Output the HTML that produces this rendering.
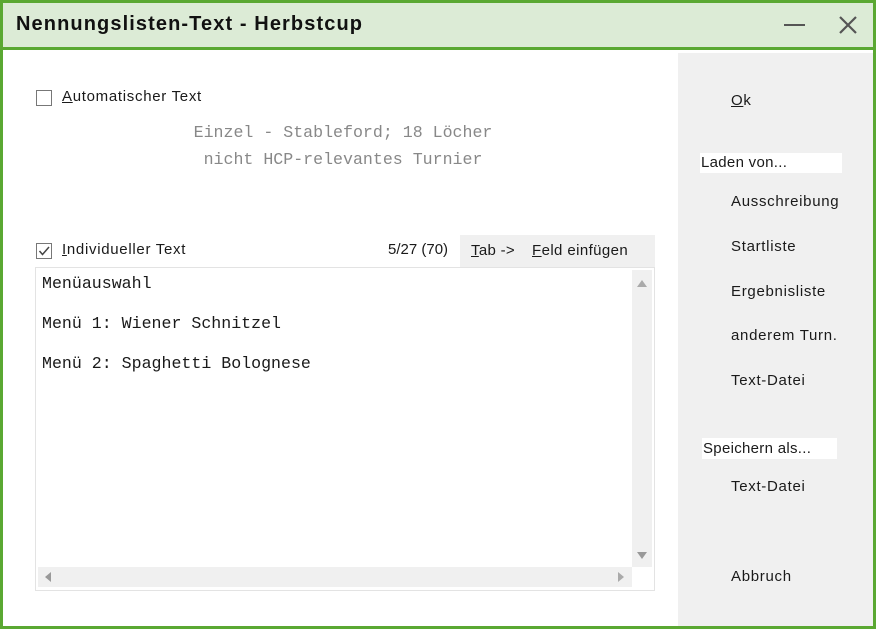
<!DOCTYPE html>
<html><head><style>
*{margin:0;padding:0;box-sizing:border-box}
body{width:876px;height:629px;overflow:hidden;background:#5aa832;font-family:"Liberation Sans",sans-serif;font-size:15px;color:#1a1a1a;position:relative;letter-spacing:0.7px}
.win{position:absolute;left:3px;top:3px;width:870px;height:623px;background:#fff}
.title{position:absolute;left:0;top:0;width:870px;height:47px;background:#dcebd6;border-bottom:3px solid #5aa832}
.title span{position:absolute;left:13px;top:10px;font-size:20px;font-weight:bold;color:#111;letter-spacing:1.1px}
.abs{position:absolute;white-space:nowrap}
.side{position:absolute;left:675px;top:47px;width:195px;height:576px;background:#f0f0f0}
.cb{position:absolute;width:16px;height:16px;border:1px solid #777;background:#fff}
.mono{font-family:"Liberation Mono",monospace;font-size:16.6px;letter-spacing:0;line-height:18px}
u{text-decoration:underline}
</style></head><body>
<div class="win">
<div class="title"><span>Nennungslisten-Text - Herbstcup</span>
<div class="abs" style="left:781px;top:21px;width:21px;height:2px;background:#555"></div>
<svg class="abs" style="left:835px;top:12px" width="20" height="20"><path d="M2 2L18 18M18 2L2 18" stroke="#555" stroke-width="2.2"/></svg>
</div>
<div class="cb" style="left:33px;top:87px"></div>
<div class="abs" style="left:59px;top:85px"><u>A</u>utomatischer Text</div>
<div class="abs mono" style="left:0;width:680px;text-align:center;top:121px;color:#888">Einzel - Stableford; 18 Löcher</div>
<div class="abs mono" style="left:0;width:680px;text-align:center;top:148px;color:#888">nicht HCP-relevantes Turnier</div>
<div class="cb" style="left:33px;top:240px"><svg width="14" height="14" style="position:absolute;left:0;top:0"><path d="M2.5 7L5.5 10.5L12 3" stroke="#444" stroke-width="1.5" fill="none"/></svg></div>
<div class="abs" style="left:59px;top:238px"><u>I</u>ndividueller Text</div>
<div class="abs" style="left:385px;top:238px;letter-spacing:0">5/27 (70)</div>
<div class="abs" style="left:457px;top:232px;width:195px;height:33px;background:#f0f0f0"></div>
<div class="abs" style="left:468px;top:239px;letter-spacing:0.3px"><u>T</u>ab -&gt;</div>
<div class="abs" style="left:529px;top:239px;letter-spacing:0.4px"><u>F</u>eld einfügen</div>
<div class="abs" style="left:32px;top:264px;width:620px;height:324px;border:1px solid #e3e3e3"></div>
<div class="abs" style="left:629px;top:267px;width:20px;height:297px;background:#f0f0f0"></div>
<div class="abs" style="left:35px;top:564px;width:594px;height:20px;background:#f0f0f0"></div>
<svg class="abs" style="left:633px;top:275px" width="12" height="10"><path d="M1 9L6 2L11 9Z" fill="#aaa"/></svg>
<svg class="abs" style="left:633px;top:548px" width="12" height="10"><path d="M1 1L6 8L11 1Z" fill="#999"/></svg>
<svg class="abs" style="left:40px;top:568px" width="10" height="12"><path d="M8 1L2 6L8 11Z" fill="#999"/></svg>
<svg class="abs" style="left:613px;top:568px" width="10" height="12"><path d="M2 1L8 6L2 11Z" fill="#aaa"/></svg>
<div class="abs mono" style="left:39px;top:272px">Menüauswahl</div>
<div class="abs mono" style="left:39px;top:312px">Menü 1: Wiener Schnitzel</div>
<div class="abs mono" style="left:39px;top:352px">Menü 2: Spaghetti Bolognese</div>
<div class="side" style="top:50px;height:573px">
<div class="abs" style="left:53px;top:39px"><u>O</u>k</div>
<div class="abs" style="left:22px;top:100px;width:142px;height:20px;background:#fff;padding-left:1px;line-height:20px;letter-spacing:0.3px">Laden von...</div>
<div class="abs" style="left:53px;top:140px">Ausschreibung</div>
<div class="abs" style="left:53px;top:185px">Startliste</div>
<div class="abs" style="left:53px;top:230px">Ergebnisliste</div>
<div class="abs" style="left:53px;top:274px">anderem Turn.</div>
<div class="abs" style="left:53px;top:319px">Text-Datei</div>
<div class="abs" style="left:24px;top:385px;width:135px;height:21px;background:#fff;padding-left:1px;line-height:21px;letter-spacing:0.3px">Speichern als...</div>
<div class="abs" style="left:53px;top:425px">Text-Datei</div>
<div class="abs" style="left:53px;top:515px">Abbruch</div>
</div>
</div>
</body></html>
